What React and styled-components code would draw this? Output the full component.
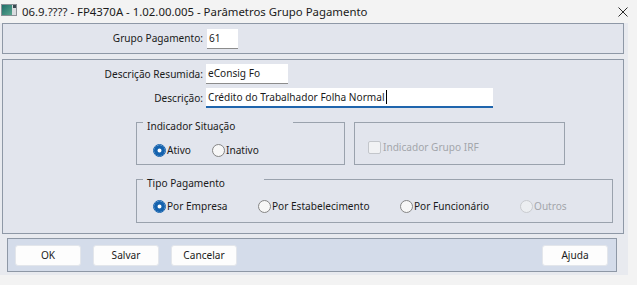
import React from "react";
import styled, { createGlobalStyle } from "styled-components";

const GlobalStyle = createGlobalStyle`
  html, body { margin: 0; padding: 0; background: #f3f3f3; }
  * { box-sizing: border-box; }
`;

const FONT = `"Noto Sans", "Open Sans", "Liberation Sans", sans-serif`;
const SIZE = "10.1px";

const Window = styled.div`
  width: 637px;
  height: 285px;
  display: flex;
  flex-direction: column;
  background: #f3f3f3;
  font-family: ${FONT};
  font-size: ${SIZE};
  color: #1a1a1a;
  overflow: hidden;
`;

const TitleBar = styled.div`
  height: 23px;
  flex: none;
  display: flex;
  align-items: center;
  padding-left: 1px;
  background: #f3f3f3;
`;

const AppIcon = styled.svg`
  flex: none;
  align-self: flex-start;
  margin-top: 4px;
`;

const Title = styled.span`
  margin-left: 5px;
  font-size: 11.4px;
  line-height: 15px;
  color: #1a1a1a;
  white-space: nowrap;
`;

const CloseIcon = styled.svg`
  margin-left: auto;
  margin-right: 9px;
  flex: none;
`;

const Body = styled.div`
  flex: 1;
  display: flex;
  align-items: flex-start;
`;

const Content = styled.div`
  width: 628px;
  display: flex;
  flex-direction: column;
  padding: 0 0 3px 2px;
  background: #e8eaef;
`;

const Panel = styled.div`
  width: 622px;
  height: ${(p) => p.$h}px;
  margin-top: ${(p) => p.$mt || 0}px;
  border: 1px solid #8e98a6;
  background: #e2e5ed;
`;

const FormGrid = styled.div`
  display: grid;
  grid-template-columns: 200px auto;
  column-gap: ${(p) => p.$gap}px;
  row-gap: 4px;
  align-items: center;
  justify-content: start;
  height: ${(p) => (p.$fill ? "100%" : "auto")};
  padding-top: ${(p) => p.$pt || 0}px;
`;

const Label = styled.span`
  text-align: right;
  line-height: 15px;
  white-space: nowrap;
`;

const TextBox = styled.div`
  width: ${(p) => p.$w}px;
  height: 20px;
  display: flex;
  align-items: center;
  padding: 0 2px;
  background: #ffffff;
  border-bottom: ${(p) => (p.$focused ? "2px solid #1f65ad" : "1px solid #8c8c8c")};
  line-height: 15px;
  white-space: nowrap;
  overflow: hidden;
`;

const Caret = styled.span`
  display: inline-block;
  width: 1px;
  height: 14px;
  background: #000;
  margin-left: 1px;
`;

const GroupRow = styled.div`
  display: flex;
  gap: 9px;
  margin: ${(p) => p.$mt}px 0 0 133px;
`;

const GroupBox = styled.div`
  position: relative;
  width: ${(p) => p.$w}px;
  height: ${(p) => p.$h}px;
  border: 1px solid #9aa2ad;
  padding: ${(p) => p.$pt}px 0 0 ${(p) => p.$pl}px;
`;

const Caption = styled.span`
  position: absolute;
  top: -4px;
  left: 6px;
  width: ${(p) => p.$w}px;
  padding-left: 4px;
  line-height: 15px;
  background: #e2e5ed;
  white-space: nowrap;
`;

const OptionRow = styled.div`
  display: grid;
  grid-template-columns: ${(p) => p.$cols};
  align-items: center;
`;

const Option = styled.label`
  display: flex;
  align-items: center;
  gap: 1px;
  height: 15px;
  line-height: 15px;
  white-space: nowrap;
  color: ${(p) => (p.$disabled ? "#a3a6ab" : "#1a1a1a")};
`;

const Radio = styled.span`
  flex: none;
  width: 13px;
  height: 13px;
  border-radius: 50%;
  border: 1px solid
    ${(p) => (p.$checked ? "#1462ae" : p.$disabled ? "#c9cbcf" : "#858585")};
  background: ${(p) => (p.$checked ? "#ffffff" : p.$disabled ? "#eceef1" : "#f7f7f7")};
  box-shadow: ${(p) => (p.$checked ? "inset 0 0 0 3.5px #1462ae" : "none")};
`;

const Check = styled.span`
  flex: none;
  width: 13px;
  height: 13px;
  border-radius: 2px;
  border: 1px solid #c3c6cb;
  background: #f1f2f4;
  margin-right: 1px;
`;

const ButtonBar = styled.div`
  width: 610px;
  height: 34px;
  margin: 4px 0 0 5px;
  display: flex;
  align-items: center;
  gap: 12px;
  padding: 0 8px 0 7px;
  border: 1px solid #8e98a6;
  background: #d4dcea;
`;

const Button = styled.button`
  width: 66px;
  height: 21px;
  flex: none;
  margin-left: ${(p) => (p.$push ? "auto" : "0")};
  padding: 0;
  border: 1px solid #e3e6eb;
  border-radius: 3px;
  background: #fdfdfd;
  font-family: ${FONT};
  font-size: ${SIZE};
  line-height: 15px;
  color: #1a1a1a;
`;

export default function App() {
  return (
    <>
      <GlobalStyle />
      <Window>
        <TitleBar>
          <AppIcon width="16" height="12" viewBox="0 0 16 12">
            <defs>
              <linearGradient id="ig" x1="0" y1="0" x2="1" y2="1">
                <stop offset="0" stopColor="#1f6f6a" />
                <stop offset="1" stopColor="#59a58e" />
              </linearGradient>
            </defs>
            <rect x="0.5" y="0.5" width="15" height="11" fill="#d9dcdf" stroke="#8a9096" />
            <rect x="1" y="1" width="10" height="10" fill="url(#ig)" />
            <rect x="12" y="1" width="3" height="3" fill="#3a4a52" />
          </AppIcon>
          <Title>06.9.???? - FP4370A - 1.02.00.005 - Parâmetros Grupo Pagamento</Title>
          <CloseIcon width="10" height="10" viewBox="0 0 10 10">
            <path d="M0.5 0.5 L9.5 9.5 M9.5 0.5 L0.5 9.5" stroke="#2b2b2b" strokeWidth="1" />
          </CloseIcon>
        </TitleBar>
        <Body>
          <Content>
            <Panel $h={31}>
              <FormGrid $gap={4} $fill>
                <Label>Grupo Pagamento:</Label>
                <TextBox $w={31}>61</TextBox>
              </FormGrid>
            </Panel>
            <Panel $h={175} $mt={5}>
              <FormGrid $gap={3} $pt={4}>
                <Label>Descrição Resumida:</Label>
                <TextBox $w={82}>eConsig Fo</TextBox>
                <Label>Descrição:</Label>
                <TextBox $w={287} $focused>
                  Crédito do Trabalhador Folha Normal
                  <Caret />
                </TextBox>
              </FormGrid>
              <GroupRow $mt={14}>
                <GroupBox $w={209} $h={43} $pt={20} $pl={16}>
                  <Caption $w={150}>Indicador Situação</Caption>
                  <OptionRow $cols="59px auto">
                    <Option>
                      <Radio $checked />
                      Ativo
                    </Option>
                    <Option>
                      <Radio />
                      Inativo
                    </Option>
                  </OptionRow>
                </GroupBox>
                <GroupBox $w={211} $h={43} $pt={17} $pl={13}>
                  <Option $disabled>
                    <Check />
                    Indicador Grupo IRF
                  </Option>
                </GroupBox>
              </GroupRow>
              <GroupRow $mt={14}>
                <GroupBox $w={477} $h={44} $pt={19} $pl={16}>
                  <Caption $w={121}>Tipo Pagamento</Caption>
                  <OptionRow $cols="105px 142px 120px auto">
                    <Option>
                      <Radio $checked />
                      Por Empresa
                    </Option>
                    <Option>
                      <Radio />
                      Por Estabelecimento
                    </Option>
                    <Option>
                      <Radio />
                      Por Funcionário
                    </Option>
                    <Option $disabled>
                      <Radio $disabled />
                      Outros
                    </Option>
                  </OptionRow>
                </GroupBox>
              </GroupRow>
            </Panel>
            <ButtonBar>
              <Button>OK</Button>
              <Button>Salvar</Button>
              <Button>Cancelar</Button>
              <Button $push>Ajuda</Button>
            </ButtonBar>
          </Content>
        </Body>
      </Window>
    </>
  );
}
